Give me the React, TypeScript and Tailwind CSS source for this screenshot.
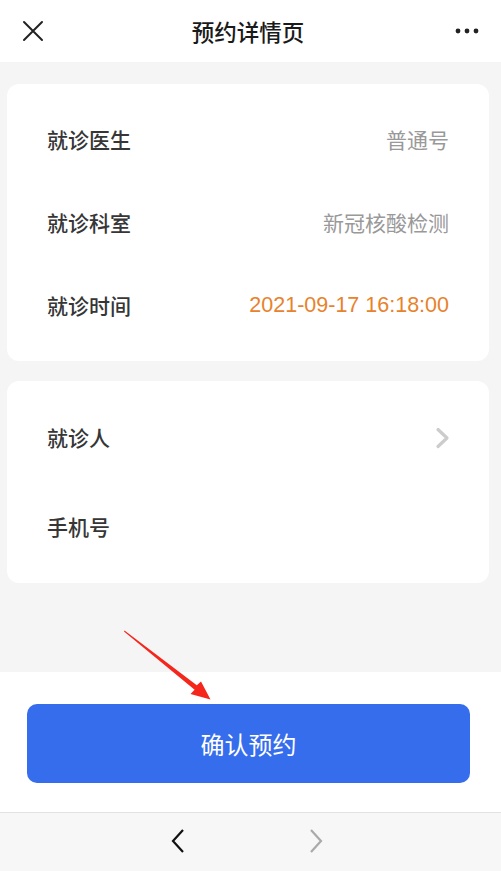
export default function App() {
  const font = { fontFamily: '"Noto Sans CJK SC", "Noto Sans", sans-serif' }
  return (
    <div className="relative w-[501px] h-[871px] flex flex-col bg-[#f5f5f5] overflow-hidden" style={font}>
      {/* Header */}
      <div className="h-[62px] shrink-0 bg-white flex items-center justify-between px-[22px]">
        <svg width="22" height="22" viewBox="0 0 22 22">
          <path d="M2 2L20 20M20 2L2 20" stroke="#222" strokeWidth="2" strokeLinecap="round" />
        </svg>
        <h1 className="text-[22.5px] font-medium text-[#1a1a1a] leading-none mr-[2px]">预约详情页</h1>
        <svg width="26" height="8" viewBox="0 0 26 8" className="mr-[-1px]">
          <circle cx="4" cy="4" r="2.4" fill="#222" />
          <circle cx="13" cy="4" r="2.4" fill="#222" />
          <circle cx="22" cy="4" r="2.4" fill="#222" />
        </svg>
      </div>

      {/* Content */}
      <div className="flex-1 pl-[7px] pr-[12px] pt-[22px] flex flex-col gap-[20px]">
        <div className="bg-white rounded-[12px] py-[14px] pl-[40px] pr-[40px]">
          <Row label="就诊医生"><span className="text-[#999]">普通号</span></Row>
          <Row label="就诊科室"><span className="text-[#999]">新冠核酸检测</span></Row>
          <Row label="就诊时间">
            <span className="text-[#e8822c] text-[21.5px]" style={{ fontFamily: '"Liberation Sans", Arial, sans-serif' }}>
              2021-09-17 16:18:00
            </span>
          </Row>
        </div>

        <div className="bg-white rounded-[12px] py-[12px] pl-[40px] pr-[39px]">
          <Row label="就诊人" tall>
            <svg width="15" height="22" viewBox="0 0 15 22">
              <path d="M3 2.5L12 11L3 19.5" stroke="#cccccc" strokeWidth="3.2" fill="none" strokeLinecap="round" strokeLinejoin="round" />
            </svg>
          </Row>
          <Row label="手机号" tall />
        </div>
      </div>

      {/* Footer */}
      <div className="h-[141px] shrink-0 bg-white border-b border-[#e2e2e2] flex items-start pt-[32px] pl-[27px] pr-[31px]">
        <button className="w-full h-[79px] rounded-[10px] bg-[#356ded] text-white text-[24px] leading-none">
          确认预约
        </button>
      </div>

      {/* Browser nav */}
      <div className="h-[58px] shrink-0 bg-[#f7f7f7] flex items-center justify-center gap-[122px] pb-[2px] pr-[8px]">
        <svg width="16" height="26" viewBox="0 0 16 26">
          <path d="M13 2L3 13L13 24" stroke="#111" strokeWidth="2.2" fill="none" />
        </svg>
        <svg width="16" height="26" viewBox="0 0 16 26">
          <path d="M3 2L13 13L3 24" stroke="#aaa" strokeWidth="2.2" fill="none" />
        </svg>
      </div>

      {/* Annotation arrow */}
      <svg className="absolute left-0 top-0 pointer-events-none" width="501" height="871">
        <polygon
          points="124.5,630.5 196.8,685.2 201,681.5 210.5,699.5 190.5,694 194.6,689.8 124,631.5"
          fill="#f5261c"
        />
      </svg>
    </div>
  )
}

function Row({ label, children, tall }: { label: string; children?: React.ReactNode; tall?: boolean }) {
  return (
    <div className={`flex items-center justify-between text-[21px] leading-none ${tall ? 'h-[89px]' : 'h-[83px]'}`}>
      <span className="font-medium text-[#363636]">{label}</span>
      {children}
    </div>
  )
}
